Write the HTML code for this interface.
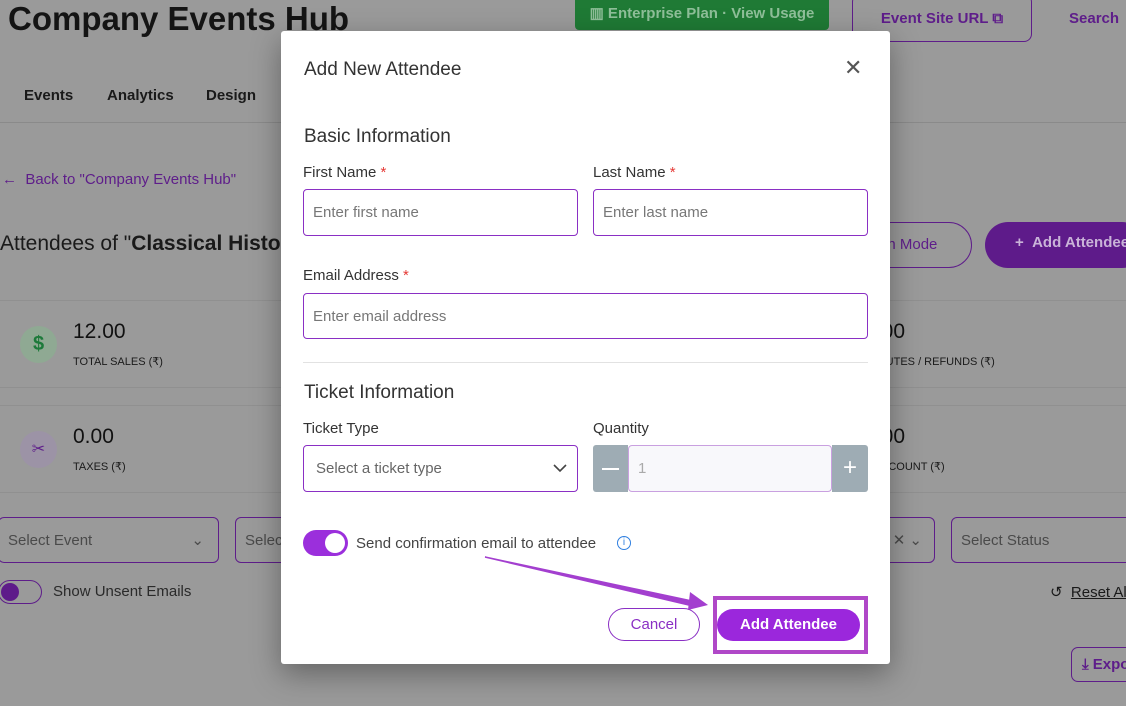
<!DOCTYPE html>
<html><head><meta charset="utf-8"><style>
*{box-sizing:border-box;margin:0;padding:0}
body{width:1126px;height:706px;overflow:hidden;background:#9a9a9a;font-family:"Liberation Sans",sans-serif;position:relative}
.a{position:absolute;white-space:nowrap}
.m{position:absolute;left:281px;top:31px;width:609px;height:633px;background:#fff;border-radius:3px;box-shadow:0 10px 30px rgba(0,0,0,.35)}
.lbl{font-size:15px;color:#333}
.req{color:#e53935}
.inp{position:absolute;border:1px solid #8a2fc4;border-radius:4px;font-size:15px;color:#777;padding-left:9px;display:flex;align-items:center}
.card{position:absolute;border:1px solid #909090;border-radius:10px}
.f{position:absolute;border:1px solid #5e1d8a;border-radius:6px;font-size:15px;color:#4a4a4a;display:flex;align-items:center;padding-left:9px}
</style></head><body>
<div class="a" style="left:8px;top:0;font-size:33px;font-weight:bold;color:#141414;line-height:38px">Company Events Hub</div>
<div class="a" style="left:575px;top:-4px;width:254px;height:34px;background:#1f7a35;border-radius:4px;color:#8fbf99;font-size:15px;font-weight:bold;display:flex;align-items:center;justify-content:center">▥ Enterprise Plan · View Usage</div>
<div class="a" style="left:852px;top:-6px;width:180px;height:48px;border:1px solid #5e1d8a;border-radius:8px;color:#5e1d8a;font-size:15px;font-weight:bold;display:flex;align-items:center;justify-content:center">Event Site URL ⧉</div>
<div class="a" style="left:1069px;top:10px;color:#5e1d8a;font-size:15px;font-weight:bold">Search</div>
<div class="a" style="left:24px;top:87px;font-size:15px;font-weight:bold;color:#1a1a1a">Events</div>
<div class="a" style="left:107px;top:87px;font-size:15px;font-weight:bold;color:#1a1a1a">Analytics</div>
<div class="a" style="left:206px;top:87px;font-size:15px;font-weight:bold;color:#1a1a1a">Design</div>
<div class="a" style="left:0;top:122px;width:1126px;height:1px;background:#8a8a8a"></div>
<div class="a" style="left:2px;top:171px;font-size:15px;color:#5e1d8a">←&nbsp;&nbsp;Back to "Company Events Hub"</div>
<div class="a" style="left:0;top:232px;font-size:21px;color:#1a1a1a">Attendees of "<b>Classical History</b></div>
<div class="a" style="left:850px;top:222px;width:122px;height:46px;border:1px solid #5e1d8a;border-radius:23px;color:#5e1d8a;font-size:15px;padding:13px 0 0 28px">on Mode</div>
<div class="a" style="left:985px;top:222px;width:160px;height:46px;background:#5e1b8a;border-radius:23px;color:#c9b3d8;font-size:15px;font-weight:bold;padding:12px 0 0 30px">+&nbsp;&nbsp;Add Attendee</div>
<div class="card" style="left:-10px;top:300px;width:1150px;height:88px"></div>
<div class="card" style="left:-10px;top:405px;width:1150px;height:88px"></div>
<div class="a" style="left:20px;top:326px;width:37px;height:37px;border-radius:50%;background:#8fa993;color:#1d7a3a;font-weight:bold;font-size:20px;text-align:center;line-height:37px">$</div>
<div class="a" style="left:20px;top:431px;width:37px;height:37px;border-radius:50%;background:#9c93a6;color:#5e1d8a;font-size:16px;text-align:center;line-height:37px">✂</div>
<div class="a" style="left:73px;top:320px;font-size:21px;color:#111">12.00</div>
<div class="a" style="left:73px;top:355px;font-size:11px;color:#1a1a1a">TOTAL SALES (₹)</div>
<div class="a" style="left:73px;top:425px;font-size:21px;color:#111">0.00</div>
<div class="a" style="left:73px;top:460px;font-size:11px;color:#1a1a1a">TAXES (₹)</div>
<div class="a" style="left:870px;top:320px;font-size:21px;color:#111">000</div>
<div class="a" style="left:860px;top:355px;font-size:11px;color:#1a1a1a">DISPUTES / REFUNDS (₹)</div>
<div class="a" style="left:870px;top:425px;font-size:21px;color:#111">000</div>
<div class="a" style="left:870px;top:460px;font-size:11px;color:#1a1a1a">DISCOUNT (₹)</div>
<div class="f" style="left:-2px;top:517px;width:221px;height:46px">Select Event<span style="position:absolute;right:14px">⌄</span></div>
<div class="f" style="left:235px;top:517px;width:100px;height:46px">Select</div>
<div class="f" style="left:800px;top:517px;width:135px;height:46px"><span style="position:absolute;right:12px">✕ ⌄</span></div>
<div class="f" style="left:951px;top:517px;width:200px;height:46px">Select Status</div>
<div class="a" style="left:-2px;top:580px;width:44px;height:24px;border:1px solid #5e1d8a;border-radius:12px"><div style="position:absolute;left:2px;top:2px;width:18px;height:18px;border-radius:50%;background:#5e1b8a"></div></div>
<div class="a" style="left:53px;top:583px;font-size:15px;color:#2a2a2a">Show Unsent Emails</div>
<div class="a" style="left:1050px;top:583px;font-size:15px;color:#1a1a1a">↺&nbsp;&nbsp;<u>Reset All</u></div>
<div class="a" style="left:1071px;top:647px;width:80px;height:35px;border:1px solid #5e1d8a;border-radius:7px;color:#5e1d8a;font-size:15px;font-weight:bold;padding:8px 0 0 10px">⤓ Export</div>

<div class="m">
<div class="a" style="left:23px;top:28px;font-size:19px;color:#333">Add New Attendee</div>
<div class="a" style="left:563px;top:24px;font-size:22px;color:#555">✕</div>
<div class="a" style="left:23px;top:95px;font-size:19px;color:#333">Basic Information</div>
<div class="a lbl" style="left:22px;top:133px">First Name <span class="req">*</span></div>
<div class="a lbl" style="left:312px;top:133px">Last Name <span class="req">*</span></div>
<div class="inp" style="left:22px;top:158px;width:275px;height:47px">Enter first name</div>
<div class="inp" style="left:312px;top:158px;width:275px;height:47px">Enter last name</div>
<div class="a lbl" style="left:22px;top:236px">Email Address <span class="req">*</span></div>
<div class="inp" style="left:22px;top:262px;width:565px;height:46px">Enter email address</div>
<div class="a" style="left:22px;top:331px;width:565px;height:1px;background:#e2e2e2"></div>
<div class="a" style="left:23px;top:351px;font-size:19px;color:#333">Ticket Information</div>
<div class="a lbl" style="left:22px;top:389px">Ticket Type</div>
<div class="a lbl" style="left:312px;top:389px">Quantity</div>
<div class="inp" style="left:22px;top:414px;width:275px;height:47px;padding-left:12px;color:#666">Select a ticket type<svg style="position:absolute;right:10px" width="14" height="9" viewBox="0 0 14 9"><path d="M1 1l6 6 6-6" fill="none" stroke="#444" stroke-width="1.6"/></svg></div>
<div class="a" style="left:312px;top:414px;width:35px;height:47px;background:#9eacb4;border-radius:3px 0 0 3px"><div style="position:absolute;left:9px;top:23px;width:17px;height:2px;background:#fff"></div></div>
<div class="inp" style="left:347px;top:414px;width:204px;height:47px;border-color:#c9a0e0;background:#f8f8fb;color:#aaa">1</div>
<div class="a" style="left:551px;top:414px;width:36px;height:47px;background:#9eacb4;border-radius:0 3px 3px 0;color:#fff;font-size:24px;text-align:center;line-height:45px">+</div>
<div class="a" style="left:22px;top:499px;width:45px;height:26px;border-radius:13px;background:#9b2fdc"><div style="position:absolute;right:3px;top:3px;width:20px;height:20px;border-radius:50%;background:#fff"></div></div>
<div class="a lbl" style="left:75px;top:504px;color:#444">Send confirmation email to attendee</div>
<div class="a" style="left:336px;top:505px;width:14px;height:14px;border:1.3px solid #2f7fe0;border-radius:50%;color:#2f7fe0;font-size:10px;text-align:center;line-height:12px">i</div>
<div class="a" style="left:327px;top:577px;width:92px;height:33px;border:1px solid #8a2fc4;border-radius:17px;color:#8a2fc4;font-size:15px;text-align:center;line-height:31px">Cancel</div>
<div class="a" style="left:432px;top:565px;width:155px;height:58px;border:4px solid #b048c8"></div>
<div class="a" style="left:436px;top:578px;width:143px;height:32px;background:#9b27dc;border-radius:16px;color:#fff;font-size:15px;font-weight:bold;text-align:center;line-height:32px">Add Attendee</div>
</div>
<svg class="a" style="left:0;top:0" width="1126" height="706"><path d="M485 557 L692 601 L693 606 Z" fill="#a33fcf" stroke="#a33fcf" stroke-width="1.5"/><path d="M708 605 L690 592 L688 610 Z" fill="#a33fcf"/></svg>
</body></html>
